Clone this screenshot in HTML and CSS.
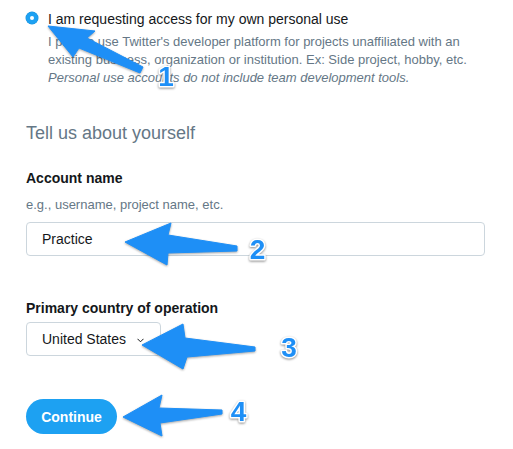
FILE: index.html
```html
<!DOCTYPE html>
<html lang="en">
<head>
<meta charset="utf-8">
<title>Developer account</title>
<link rel="stylesheet" href="styles.css">
</head>
<body>
<main class="page">
  <div class="option">
    <span class="radio"><span class="radio-dot"></span></span>
    <div class="option-body">
      <div class="option-title">I am requesting access for my own personal use</div>
      <p class="option-desc">I plan to use Twitter's developer platform for projects unaffiliated with an<br>existing business, organization or institution. Ex: Side project, hobby, etc.<br><em>Personal use accounts do not include team development tools.</em></p>
    </div>
  </div>

  <h2 class="section-title">Tell us about yourself</h2>

  <div class="field">
    <label class="label">Account name</label>
    <div class="hint">e.g., username, project name, etc.</div>
    <div class="input">Practice</div>
  </div>

  <div class="field field-country">
    <label class="label">Primary country of operation</label>
    <div class="select">
      <span>United States</span>
      <svg class="chev" width="7" height="5" viewBox="0 0 7 5"><polyline points="0.5,0.8 3.5,3.8 6.5,0.8" fill="none" stroke="#14171a" stroke-width="1"/></svg>
    </div>
  </div>

  <button class="btn">Continue</button>
</main>

<svg class="annotations" width="513" height="449" viewBox="0 0 513 449">
  <g class="arrow">
    <polygon points="48,26 95,31 87,38 143,67 140,73 79,48 73,57"/>
    <polygon points="125,242 171,223 168,235 237,246 237,251 168,253 167,265"/>
    <polygon points="142,345 183,324 185,338 255,347 255,351 187,357 183,369"/>
    <polygon points="123,417 162,395 159,408 222,410 222,414 160,423 162,436"/>
  </g>
  <g class="num">
    <text x="166" y="86">1</text>
    <text x="257.5" y="258.5">2</text>
    <text x="289" y="356.5">3</text>
    <text x="238.5" y="420.5">4</text>
  </g>
</svg>
</body>
</html>
```

FILE: styles.css
```css
* { box-sizing: border-box; }

html, body {
  margin: 0;
  padding: 0;
  background: #ffffff;
}

body {
  width: 513px;
  height: 449px;
  position: relative;
  overflow: hidden;
  font-family: "Liberation Sans", Arial, sans-serif;
  color: #14171a;
}

.page {
  padding: 10px 28px 0 26px;
  display: flex;
  flex-direction: column;
  align-items: flex-start;
}

.option {
  display: flex;
  gap: 10px;
  align-items: flex-start;
}

.radio {
  width: 12px;
  height: 12px;
  margin-top: 2px;
  border-radius: 50%;
  background: #1da1f2;
  display: flex;
  align-items: center;
  justify-content: center;
  box-shadow: 0 0 0 0.5px #1a91da;
}

.radio-dot {
  width: 4px;
  height: 4px;
  border-radius: 50%;
  background: #ffffff;
}

.option-title {
  font-size: 14px;
  line-height: 18px;
  color: #14171a;
}

.option-desc {
  margin: 5px 0 0;
  font-size: 13px;
  line-height: 18px;
  color: #657786;
  white-space: nowrap;
}

.option-desc em { font-style: italic; }

.section-title {
  margin: 35px 0 0;
  font-size: 18px;
  line-height: 22px;
  font-weight: normal;
  color: #657786;
}

.field {
  display: flex;
  flex-direction: column;
  align-self: stretch;
  align-items: flex-start;
  margin-top: 25px;
}

.field-country { margin-top: 43px; }

.label {
  font-size: 14px;
  line-height: 18px;
  font-weight: bold;
  color: #14171a;
}

.hint {
  margin-top: 9px;
  font-size: 13px;
  line-height: 18px;
  color: #657786;
}

.input {
  align-self: stretch;
  margin-top: 8px;
  height: 34px;
  padding: 0 15px;
  border: 1px solid #ccd6dd;
  border-radius: 4px;
  font-size: 14px;
  line-height: 32px;
  color: #14171a;
}

.select {
  margin-top: 5px;
  height: 34px;
  width: 135px;
  padding: 0 15px;
  border: 1px solid #ccd6dd;
  border-radius: 4px;
  display: flex;
  align-items: center;
  gap: 11px;
  font-size: 14px;
  color: #14171a;
}

.chev { margin-top: 2px; }

.btn {
  margin-top: 43px;
  height: 35px;
  width: 91px;
  border: none;
  border-radius: 18px;
  background: #1da1f2;
  color: #ffffff;
  font-family: "Liberation Sans", Arial, sans-serif;
  font-size: 14px;
  font-weight: bold;
  padding: 0;
}

.annotations {
  position: absolute;
  left: 0;
  top: 0;
  pointer-events: none;
}

.arrow polygon {
  fill: #1e8ff6;
  stroke: #1e8ff6;
  stroke-width: 1;
  stroke-linejoin: round;
  filter: drop-shadow(0 1px 1.2px rgba(0, 0, 0, 0.35));
}

.num text {
  font-family: "Liberation Sans", Arial, sans-serif;
  font-weight: bold;
  font-size: 28px;
  text-anchor: middle;
  fill: #1e8ff6;
  stroke: #ffffff;
  stroke-width: 3px;
  stroke-linejoin: round;
  paint-order: stroke;
  filter: drop-shadow(0 1px 1px rgba(0, 0, 0, 0.45));
}
```
